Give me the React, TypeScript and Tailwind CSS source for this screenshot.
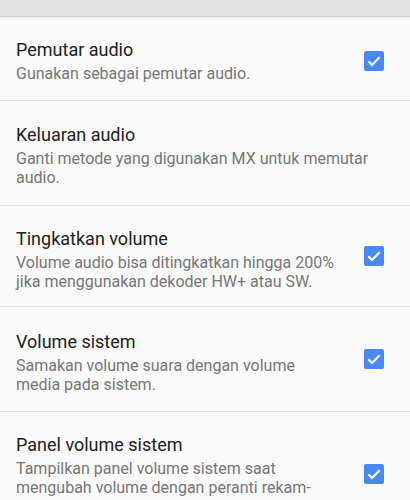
import React from 'react';

type Pref = {
  title: string;
  lines: string[];
  checked?: boolean;
  height: string;
  pad: string;
};

const prefs: Pref[] = [
  {
    title: 'Pemutar audio',
    lines: ['Gunakan sebagai pemutar audio.'],
    checked: true,
    height: 'h-[80px]',
    pad: 'pt-[17px]',
  },
  {
    title: 'Keluaran audio',
    lines: ['Ganti metode yang digunakan MX untuk memutar', 'audio.'],
    height: 'h-[105px]',
    pad: 'pt-[22px]',
  },
  {
    title: 'Tingkatkan volume',
    lines: ['Volume audio bisa ditingkatkan hingga 200%', 'jika menggunakan dekoder HW+ atau SW.'],
    checked: true,
    height: 'h-[101px]',
    pad: 'pt-[21px]',
  },
  {
    title: 'Volume sistem',
    lines: ['Samakan volume suara dengan volume', 'media pada sistem.'],
    checked: true,
    height: 'h-[105px]',
    pad: 'pt-[23px]',
  },
  {
    title: 'Panel volume sistem',
    lines: ['Tampilkan panel volume sistem saat', 'mengubah volume dengan peranti rekam-', 'an audio sistem.'],
    checked: true,
    height: 'h-[123px]',
    pad: 'pt-[21px]',
  },
];

function Checkbox() {
  return (
    <div className="w-5 h-5 rounded-[2px] bg-[#4a89f3] flex items-center justify-center shrink-0">
      <svg width="16" height="16" viewBox="0 0 24 24">
        <path d="M3.5 12.5l5.5 5.5L20.5 6.5" fill="none" stroke="#fff" strokeWidth="3.2" />
      </svg>
    </div>
  );
}

export default function App() {
  return (
    <div className="w-[410px] h-[500px] overflow-hidden bg-[#fafafa] font-['Roboto',sans-serif]">
      <div className="h-[17px] bg-[#e1e1e1] border-b border-[#d3d3d3]" />
      <div className="h-[4px] bg-gradient-to-b from-[#ebebeb] to-[#fafafa]" />
      {prefs.map((p, i) => (
        <div
          key={i}
          className={`${p.height} flex items-center pl-4 pr-[26px] ${i < prefs.length - 1 ? 'border-b border-[#e3e3e3]' : ''}`}
        >
          <div className={`flex-1 self-start ${p.pad}`}>
            <div className="text-[18px] leading-[24px] text-[#212121]">{p.title}</div>
            <div className="mt-[2px] text-[16px] leading-[19px] text-[#767676]">
              {p.lines.map((l, j) => (
                <div key={j} className="whitespace-nowrap">
                  {l}
                </div>
              ))}
            </div>
          </div>
          {p.checked && <Checkbox />}
        </div>
      ))}
    </div>
  );
}
